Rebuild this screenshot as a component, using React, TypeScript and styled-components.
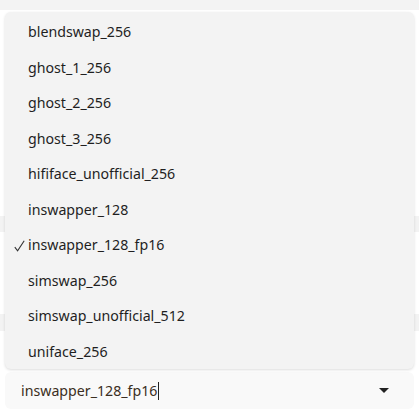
import React from 'react';
import styled, { createGlobalStyle } from 'styled-components';

const GlobalStyle = createGlobalStyle`
    html, body {
        margin: 0;
        padding: 0;
        background: #ffffff;
        font-family: 'Noto Sans', 'Open Sans', sans-serif;
    }
`;

const models = [
    'blendswap_256',
    'ghost_1_256',
    'ghost_2_256',
    'ghost_3_256',
    'hififace_unofficial_256',
    'inswapper_128',
    'inswapper_128_fp16',
    'simswap_256',
    'simswap_unofficial_512',
    'uniface_256',
];

const Page = styled.div`
    display: flex;
    flex-direction: column;
    width: 419px;
    height: 420px;
    overflow: hidden;
`;

const TopStrip = styled.div`
    height: 10px;
    background: #f3f3f3;
`;

const BgBar = styled.div<{ $top: number; $height: number }>`
    margin-top: ${(p) => p.$top}px;
    height: ${(p) => p.$height}px;
    background: #f3f3f3;
`;

const SelectWrap = styled.div`
    position: relative;
    margin: 41px 5px 0;
`;

const SelectBox = styled.div`
    display: flex;
    align-items: center;
    height: 37px;
    padding: 0 16px;
    border-radius: 6px;
    background: #f9f9f9;
    font-size: 14.2px;
    color: #3b2e22;
`;

const Value = styled.span`
    flex: 1;
    display: flex;
    align-items: center;
`;

const Caret = styled.span`
    display: inline-block;
    width: 1px;
    height: 18px;
    margin-left: 1px;
    background: #222;
`;

const Arrow = styled.svg`
    width: 10px;
    height: 5px;
    margin-right: 9px;
`;

const Menu = styled.ul`
    position: absolute;
    left: 0;
    right: 0;
    bottom: calc(100% + 3px);
    margin: 0;
    padding: 2px 0 0;
    list-style: none;
    border-radius: 6px;
    background: #f3f3f3;
    box-shadow: 0 1px 3px rgba(0, 0, 0, 0.14);
`;

const Item = styled.li`
    position: relative;
    display: flex;
    align-items: center;
    height: 35.5px;
    padding-left: 23px;
    font-size: 14.2px;
    color: #1f1f1f;
`;

const CheckIcon = styled.svg`
    position: absolute;
    left: 9px;
    top: 50%;
    width: 11px;
    height: 12px;
    margin-top: -5px;
`;

export default function App() {
    const selected = 'inswapper_128_fp16';
    return (
        <>
            <GlobalStyle />
            <Page>
                <TopStrip />
                <BgBar $top={206} $height={16} />
                <BgBar $top={82} $height={17} />
                <SelectWrap>
                    <Menu>
                        {models.map((m) => (
                            <Item key={m}>
                                {m === selected && (
                                    <CheckIcon viewBox="0 0 11 12">
                                        <path
                                            d="M0.8 7.2 L3.6 10.8 L10.2 0.8"
                                            fill="none"
                                            stroke="#333"
                                            strokeWidth="1.1"
                                        />
                                    </CheckIcon>
                                )}
                                {m}
                            </Item>
                        ))}
                    </Menu>
                    <SelectBox>
                        <Value>
                            {selected}
                            <Caret />
                        </Value>
                        <Arrow viewBox="0 0 10 5">
                            <path d="M0 0 H10 L5 5 Z" fill="#222" />
                        </Arrow>
                    </SelectBox>
                </SelectWrap>
            </Page>
        </>
    );
}
